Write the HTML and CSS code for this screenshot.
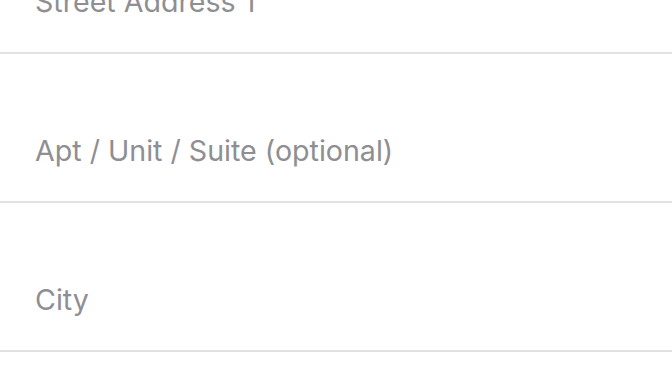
FILE: index.html
```html
<!DOCTYPE html>
<html lang="en">
<head>
    <meta charset="UTF-8">
    <meta name="viewport" content="width=device-width, initial-scale=1.0">
    <title>Shipping Address</title>
    <link rel="stylesheet" href="styles.css">
</head>
<body>
    <form class="address">
        <!-- Address fields -->
        <div class="field">
            <input type="text" placeholder="Street Address 1">
        </div>
        <div class="field">
            <input type="text" placeholder="Apt / Unit / Suite (optional)">
        </div>
        <div class="field">
            <input type="text" placeholder="City">
        </div>
    </form>
</body>
</html>
```

FILE: styles.css
```css
body {
    font-family: Inter, "Noto Sans", sans-serif;
    background: #fff;
    margin: 0;
    padding: 0;
    overflow: hidden;
}
.address {
    margin-top: -95px;
}
.field {
    height: 147px;
    box-sizing: content-box;
    display: flex;
    align-items: flex-end;
    padding: 0 35px;
    border-bottom: 2px solid #e2e2e4;
}
.field input {
    width: 100%;
    height: 35px;
    margin-bottom: 33px;
    padding: 0;
    border: none;
    outline: none;
    background: transparent;
    font-family: inherit;
    font-size: 28.6px;
    color: #333;
}
.field input::placeholder {
    color: #8e8e93;
    opacity: 1;
}
```
